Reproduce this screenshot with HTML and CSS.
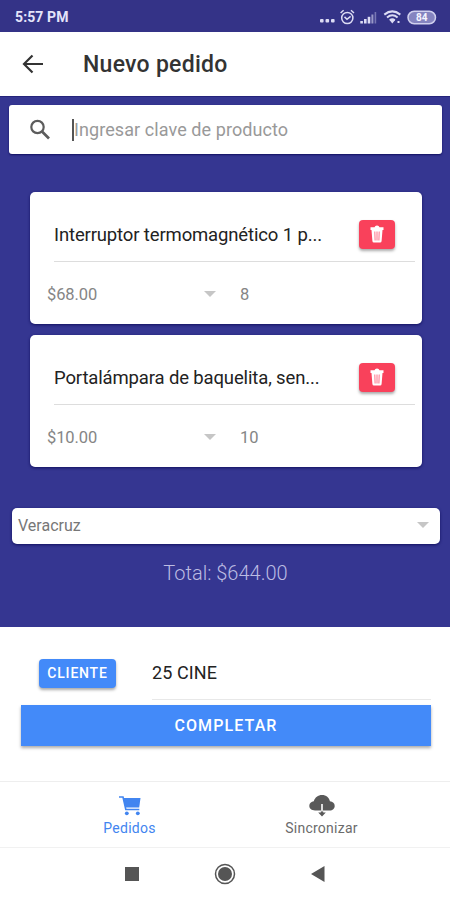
FILE: index.html
```html
<!DOCTYPE html>
<html lang="es">
<head>
<meta charset="utf-8">
<title>Nuevo pedido</title>
<link rel="stylesheet" href="styles.css">
</head>
<body>
<div class="status">
  <span class="clock">5:57 PM</span>
  <svg class="status-icons" width="120" height="20" viewBox="0 0 120 20">
    <g fill="#dcdcf4"><rect x="0" y="12" width="3.600" height="3.600" rx="1"/><rect x="5.500" y="12" width="3.600" height="3.600" rx="1"/><rect x="11" y="12" width="3.600" height="3.600" rx="1"/></g>
    <g fill="none" stroke="#dcdcf4" stroke-width="1.500"><circle cx="27.300" cy="11" r="5.600"/><path d="M20.600 6l3-2.700M34 6l-3-2.700M24.500 9.900l2.500 2.400 3.600-3"/></g>
    <g fill="#dcdcf4"><rect x="40.300" y="14" width="2.600" height="2.500"/><rect x="44" y="12" width="2.600" height="4.500"/><rect x="47.700" y="9.800" width="2.600" height="6.700"/><rect x="51.400" y="7.500" width="2" height="9" opacity=".6"/><rect x="54.600" y="5" width="1.600" height="11.500" opacity=".4"/></g>
    <g fill="none" stroke="#dcdcf4" stroke-width="2"><path d="M64.300 7.600q8-6.400 16 0M67 10.500q5.300-4.400 10.600 0M69.800 13.200q2.500-2 5 0"/></g>
    <path d="M69.500 13l2.800 3.500 2.800-3.500z" fill="#dcdcf4"/><rect x="77.500" y="14" width="2" height="2" fill="#dcdcf4"/>
    <rect x="88" y="4.300" width="27.500" height="12.400" rx="6.200" fill="#8584c0" stroke="#d0d0ee" stroke-width="1.500"/>
    <text class="battery" x="101.700" y="14" text-anchor="middle">84</text>
  </svg>
</div>
<header class="header">
  <svg width="22" height="20" viewBox="0 0 22 20"><path d="M21 10H2M10.500 1.500L2 10l8.500 8.500" fill="none" stroke="#333" stroke-width="2.200"/></svg>
  <h1 class="title">Nuevo pedido</h1>
</header>
<main class="content">
  <div class="search">
    <svg width="22" height="22" viewBox="0 0 22 22" fill="none" stroke="#5c5c5c"><circle cx="8.500" cy="8" r="6.200" stroke-width="2.200"/><path d="M13 12.500l7 7" stroke-width="2.700"/></svg>
    <span class="caret"></span><span class="placeholder">Ingresar clave de producto</span>
  </div>
  <section class="cards">
    <article class="card">
      <div class="product"><span class="name">Interruptor termomagnético 1 p...</span>
        <button class="trash"><svg width="14" height="18" viewBox="0 0 14 18"><path d="M4.500 2.300Q5 .6 7 .6t2.500 1.700h4V5H.5V2.300zM1.500 5h11l-.9 11q-.1 1.500-1.500 1.500H3.900q-1.400 0-1.500-1.500z" fill="#fff"/><path d="M4.800 6.500l.3 9M7 6.500v9M9.200 6.500l-.3 9" stroke="#ff7187" stroke-width="1"/></svg></button></div>
      <div class="values"><span class="price">$68.00</span><i class="arrow"></i><span class="qty">8</span></div>
    </article>
    <article class="card">
      <div class="product"><span class="name">Portalámpara de baquelita, sen...</span>
        <button class="trash"><svg width="14" height="18" viewBox="0 0 14 18"><path d="M4.500 2.300Q5 .6 7 .6t2.500 1.700h4V5H.5V2.300zM1.500 5h11l-.9 11q-.1 1.500-1.500 1.500H3.900q-1.400 0-1.500-1.500z" fill="#fff"/><path d="M4.800 6.500l.3 9M7 6.500v9M9.200 6.500l-.3 9" stroke="#ff7187" stroke-width="1"/></svg></button></div>
      <div class="values"><span class="price">$10.00</span><i class="arrow"></i><span class="qty">10</span></div>
    </article>
  </section>
  <div class="select"><span>Veracruz</span><i class="arrow"></i></div>
  <p class="total">Total: $644.00</p>
</main>
<section class="checkout">
  <div class="client-row"><button class="client">CLIENTE</button><div class="client-name">25 CINE</div></div>
  <button class="complete">COMPLETAR</button>
</section>
<nav class="tabs">
  <div class="tab tab-active">
    <svg width="24" height="22" viewBox="0 0 24 22"><path d="M1 2h4l2.800 12.500h13.500" fill="none" stroke="#4285f0" stroke-width="1.600"/><path d="M5 3h17.500l-1.300 9.500H7.500z" fill="#4285f0"/><g fill="#4285f0"><circle cx="8.800" cy="18.300" r="1.900"/><circle cx="19.800" cy="18.300" r="1.900"/></g></svg>
    <span>Pedidos</span>
  </div>
  <div class="tab">
    <svg width="26" height="22" viewBox="0 0 26 22"><path d="M6 15.500C2.500 15.500.3 13.500.3 10.800c0-2.700 2-4.300 4.500-4.600C6 2.500 9 0 13 0c4.200 0 7.200 2.700 7.900 6.300 2.900.3 4.800 2 4.800 4.600s-2.100 4.600-5 4.600z" fill="#595959"/><path d="M13 9v9" stroke="#ddd" stroke-width="2"/><path d="M9.200 17.500h2.600v-1h2.400v1h2.600L13 21.500z" fill="#595959"/></svg>
    <span>Sincronizar</span>
  </div>
</nav>
<footer class="system">
  <svg width="14" height="14"><rect width="14" height="14" fill="#555"/></svg>
  <svg width="22" height="22" viewBox="0 0 22 22"><circle cx="11" cy="11" r="9.500" fill="none" stroke="#555" stroke-width="1.500"/><circle cx="11" cy="11" r="7" fill="#555"/></svg>
  <svg width="14" height="16"><path d="M0 8L13.500 0v16z" fill="#555"/></svg>
</footer>
</body>
</html>
```
FILE: styles.css
```css
* { box-sizing: border-box; }
body { margin: 0; width: 450px; height: 900px; overflow: hidden; background: #fff; font-family: Roboto, sans-serif; color: #222; }
button { border: 0; padding: 0; font-family: inherit; color: #fff; }
span, p, h1 { white-space: nowrap; }
svg { display: block; flex: none; }
.status { height: 32px; background: #343387; display: flex; justify-content: space-between; align-items: center; padding: 1px 10px 0 15px; }
.clock { font-size: 14px; font-weight: 700; letter-spacing: .1px; color: #e4e4fa; }
.battery { font: 700 10px Roboto, sans-serif; fill: #f5f5ff; }
.header { height: 64px; display: flex; align-items: center; padding-left: 22px; }
.title { margin: 0 0 0 39px; font-size: 23px; font-weight: 500; letter-spacing: .27px; color: #333; }
.content { height: 531px; background: #353691; border-top: 1px solid #25247b; padding-top: 8px; }
.search { height: 49px; margin: 0 8px 0 9px; background: #fff; border-radius: 3px; display: flex; align-items: center; padding-left: 20px; box-shadow: 0 1px 2px #10105f; }
.caret { width: 2px; height: 22px; background: #555; margin-left: 21px; }
.placeholder { font-size: 18px; letter-spacing: .08px; color: #999; }
.cards { margin: 38px 28px 0 30px; display: grid; gap: 11px; }
.card { height: 132px; border-radius: 5px; background: #fff; box-shadow: 0 1px 3px #11105f; padding: 0 7px 0 17px; }
.product { margin-left: 7px; height: 70px; padding: 15px 20px 0 0; border-bottom: 1px solid #ddd; display: flex; justify-content: space-between; align-items: center; }
.name { font-size: 18.500px; letter-spacing: -.14px; margin-top: 2px; color: #222; }
.trash { width: 36px; height: 29px; border-radius: 4px; background: #f9415b; box-shadow: 0 2px 3px #aaa; display: flex; align-items: center; justify-content: center; }
.values { height: 64px; display: flex; align-items: center; font-size: 16.500px; color: #858585; }
.price { width: 157px; letter-spacing: -.1px; }
.arrow { border: 6px solid transparent; border-top-color: #c6c6c6; border-bottom: 0; }
.qty { margin-left: 24px; }
.select { height: 36px; margin: 41px 10px 0 12px; background: #fff; border-radius: 5px; box-shadow: 0 1px 3px #11105f; display: flex; align-items: center; justify-content: space-between; padding: 0 11px 2px 6px; font-size: 16px; color: #777; }
.total { margin: 17px 0 0 1px; text-align: center; font-size: 20px; line-height: 24px; font-weight: 300; color: #bcbce3; }
.checkout { height: 154px; padding: 23px 19px 0 21px; }
.client-row { height: 50px; display: flex; align-items: flex-start; padding-left: 18px; }
.client { width: 77px; height: 29px; margin-top: 9px; padding-bottom: 2px; border-radius: 4px; background: #438af9; font-size: 14px; font-weight: 500; letter-spacing: .8px; box-shadow: 0 2px 3px #aaa; }
.client-name { margin-left: 36px; flex: 1; height: 50px; padding-top: 12px; font-size: 18px; line-height: 22px; letter-spacing: .1px; border-bottom: 1px solid #e8e8e8; }
.complete { display: block; width: 410px; height: 41px; margin-top: 5px; background: #438af9; font-size: 16px; font-weight: 500; letter-spacing: 1.1px; box-shadow: 0 2px 3px #aaa; }
.tabs { height: 67px; border-top: 1px solid #eee; border-bottom: 1px solid #f1f1f1; display: flex; justify-content: center; padding-left: 1px; }
.tab { width: 192px; padding-top: 13px; display: flex; flex-direction: column; align-items: center; color: #6b6b6b; font-size: 14px; letter-spacing: .25px; }
.tab span { line-height: 20px; margin-top: 1px; }
.tab-active { color: #4285f0; }
.system { height: 52px; display: flex; align-items: center; gap: 75px; padding-left: 125px; }
```
